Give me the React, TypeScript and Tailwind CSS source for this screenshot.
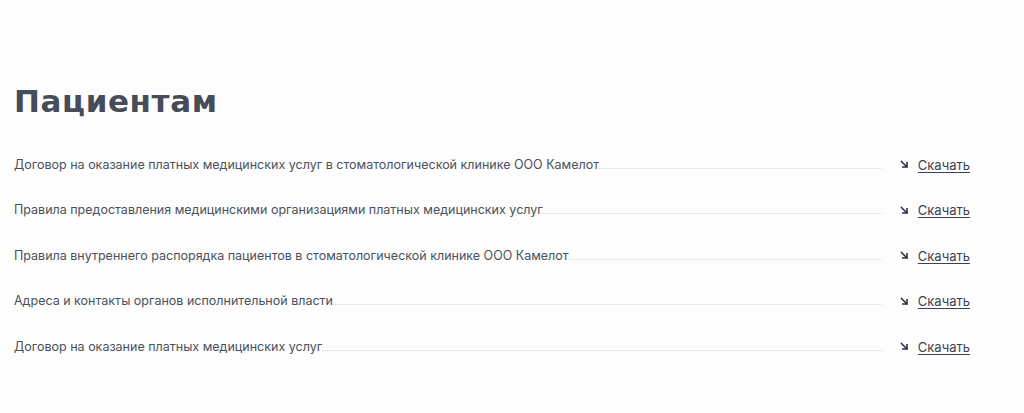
import React from 'react';

const docs = [
  'Договор на оказание платных медицинских услуг в стоматологической клинике ООО Камелот',
  'Правила предоставления медицинскими организациями платных медицинских услуг',
  'Правила внутреннего распорядка пациентов в стоматологической клинике ООО Камелот',
  'Адреса и контакты органов исполнительной власти',
  'Договор на оказание платных медицинских услуг',
];

const ArrowDownRight = () => (
  <svg width="9" height="9" viewBox="0 0 9 9" fill="none" className="shrink-0">
    <path d="M1.5 1.5L7 7M7 2.8V7H2.8" stroke="#2f3542" strokeWidth="1.6" strokeLinecap="square" />
  </svg>
);

const App: React.FC = () => {
  return (
    <div className="w-[1024px] h-[413px] bg-[#fdfdfd] pl-[14px] pr-[54px] pt-[82px] font-['Inter',sans-serif]">
      <h1 className="text-[31px] leading-[38px] font-bold text-[#464c58] font-['DejaVu_Sans',sans-serif] tracking-[0.6px]">
        Пациентам
      </h1>
      <div className="mt-[23px] flex flex-col">
        {docs.map((doc, idx) => (
          <div key={idx} className="flex items-end h-[45.6px] pb-[16px]">
            <span className="text-[12.5px] leading-[16px] text-[#4b515c] whitespace-nowrap">{doc}</span>
            <span className="flex-1 mb-[4px] border-b border-dotted border-[#d3d7df]"></span>
            <a href="#" className="ml-[18px] flex items-center gap-[9px] text-[13px] leading-[16px] text-[#3c4250] underline underline-offset-2">
              <ArrowDownRight />
              Скачать
            </a>
          </div>
        ))}
      </div>
    </div>
  );
};

export default App;
